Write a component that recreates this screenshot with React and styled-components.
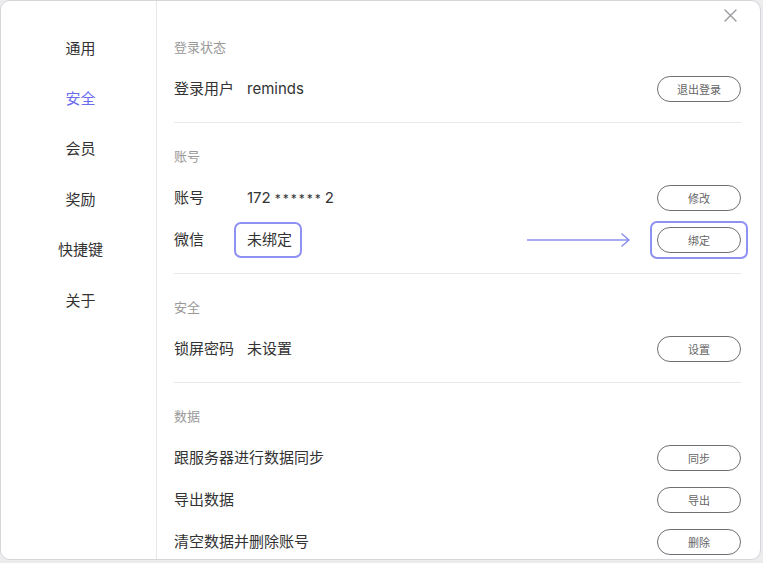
import React from "react";
import styled, { createGlobalStyle } from "styled-components";

const GlobalStyle = createGlobalStyle`
  body {
    margin: 0;
    background: #ececef;
    font-family: "Inter", "Noto Sans CJK SC", sans-serif;
    color: #333;
  }
`;

const Window = styled.div`
  position: relative;
  width: 761px;
  height: 560px;
  box-sizing: border-box;
  border: 1px solid #d6d6da;
  border-radius: 10px;
  background: #fff;
  display: flex;
  overflow: hidden;
`;

const Sidebar = styled.div`
  width: 155px;
  flex-shrink: 0;
  border-right: 1px solid #e6e6e8;
  padding-top: 21px;
  display: flex;
  flex-direction: column;
`;

const NavItem = styled.div`
  height: 50.4px;
  padding-left: 4px;
  display: flex;
  align-items: center;
  justify-content: center;
  font-size: 15px;
  color: ${(p) => (p.active ? "#6b6cf0" : "#333")};
`;

const Content = styled.div`
  flex: 1;
  padding: 36px 19px 0 17px;
`;

const Section = styled.div`
  padding-bottom: 12px;
  border-bottom: ${(p) => (p.last ? "none" : "1px solid #e8e8ea")};
  & + & {
    padding-top: 23px;
  }
`;

const SectionTitle = styled.div`
  font-size: 13px;
  line-height: 20px;
  color: #999;
  margin-bottom: 11px;
`;

const Row = styled.div`
  height: 42px;
  display: flex;
  align-items: center;
  font-size: 15px;
  line-height: 20px;
`;

const Label = styled.div`
  width: 73px;
  flex-shrink: 0;
`;

const Value = styled.div`
  position: relative;
  ${(p) =>
    p.highlight &&
    `
    &::after {
      content: "";
      position: absolute;
      inset: -8px -10px -8px -13px;
      border: 2px solid #8e90f2;
      border-radius: 7px;
    }
  `}
`;

const Stars = styled.span`
  letter-spacing: 2px;
  margin: 0 2px 0 4px;
  font-size: 12px;
`;

const Arrow = styled.svg`
  margin-left: auto;
  margin-right: 26px;
`;

const Button = styled.button`
  position: relative;
  margin-left: ${(p) => (p.noAuto ? "0" : "auto")};
  width: 84px;
  height: 26px;
  border: 1px solid #6f6f73;
  border-radius: 13px;
  background: #fff;
  font-family: "Noto Sans CJK SC", sans-serif;
  font-size: 11px;
  color: #666;
  padding: 0;
  ${(p) =>
    p.highlight &&
    `
    &::after {
      content: "";
      position: absolute;
      inset: -7px -8px -7px -8px;
      border: 2px solid #8e90f2;
      border-radius: 7px;
    }
  `}
`;

const Close = styled.svg`
  position: absolute;
  top: 8px;
  right: 23px;
`;

const nav = ["通用", "安全", "会员", "奖励", "快捷键", "关于"];

export default function App() {
  return (
    <>
      <GlobalStyle />
      <Window>
        <Sidebar>
          {nav.map((n) => (
            <NavItem key={n} active={n === "安全"}>
              {n}
            </NavItem>
          ))}
        </Sidebar>
        <Content>
          <Section>
            <SectionTitle>登录状态</SectionTitle>
            <Row>
              <Label>登录用户</Label>
              <Value>reminds</Value>
              <Button>退出登录</Button>
            </Row>
          </Section>
          <Section>
            <SectionTitle>账号</SectionTitle>
            <Row>
              <Label>账号</Label>
              <Value>
                172<Stars>******</Stars>2
              </Value>
              <Button>修改</Button>
            </Row>
            <Row>
              <Label>微信</Label>
              <Value highlight>未绑定</Value>
              <Arrow width="104" height="16" viewBox="0 0 104 16">
                <path
                  d="M0 8H102M95 2L102 8L95 14"
                  fill="none"
                  stroke="#8e90f2"
                  strokeWidth="1.6"
                  strokeLinecap="round"
                  strokeLinejoin="round"
                />
              </Arrow>
              <Button noAuto highlight>
                绑定
              </Button>
            </Row>
          </Section>
          <Section>
            <SectionTitle>安全</SectionTitle>
            <Row>
              <Label>锁屏密码</Label>
              <Value>未设置</Value>
              <Button>设置</Button>
            </Row>
          </Section>
          <Section last>
            <SectionTitle>数据</SectionTitle>
            <Row>
              跟服务器进行数据同步
              <Button>同步</Button>
            </Row>
            <Row>
              导出数据
              <Button>导出</Button>
            </Row>
            <Row>
              清空数据并删除账号
              <Button>删除</Button>
            </Row>
          </Section>
        </Content>
        <Close width="13" height="13" viewBox="0 0 13 13">
          <path
            d="M1 1L12 12M12 1L1 12"
            stroke="#9a9a9e"
            strokeWidth="1.4"
            strokeLinecap="round"
          />
        </Close>
      </Window>
    </>
  );
}
